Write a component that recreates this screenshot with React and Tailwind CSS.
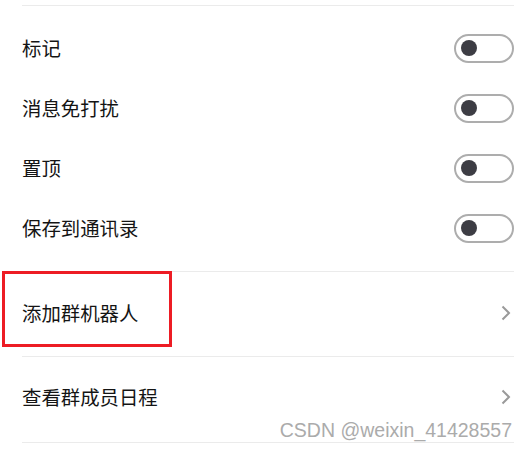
import React from "react";

const font = { fontFamily: '"Noto Sans CJK SC", "Noto Sans", sans-serif' };

function Toggle() {
  return (
    <div className="w-[60px] h-[29px] rounded-full border-2 border-[#adadad] bg-white flex items-center pl-[5px]">
      <div className="w-[16px] h-[16px] rounded-full bg-[#3d3d44]" />
    </div>
  );
}

function Chevron() {
  return (
    <svg width="10" height="16" viewBox="0 0 10 16" className="mr-[3px]">
      <path d="M1.5 1.5 L8 8 L1.5 14.5" fill="none" stroke="#9a9a9a" strokeWidth="2" />
    </svg>
  );
}

function ToggleRow({ label }) {
  return (
    <div className="h-[60px] flex items-center justify-between">
      <span className="text-[19.4px] text-[#141414] leading-none">{label}</span>
      <Toggle />
    </div>
  );
}

export default function App() {
  return (
    <div className="w-[527px] h-[450px] bg-white relative overflow-hidden" style={font}>
      <div className="ml-[22px] mr-[13px] pt-[5px]">
        <div className="h-px bg-[#ebebeb]" />
        <div className="pt-3 pb-[13px]">
          <ToggleRow label="标记" />
          <ToggleRow label="消息免打扰" />
          <ToggleRow label="置顶" />
          <ToggleRow label="保存到通讯录" />
        </div>
        <div className="h-px bg-[#ebebeb]" />
        <div className="h-[84px] pb-[2px] flex items-center justify-between">
          <span className="text-[19.4px] text-[#141414] leading-none">添加群机器人</span>
          <Chevron />
        </div>
        <div className="h-px bg-[#ebebeb]" />
        <div className="h-[85px] pb-[5px] flex items-center justify-between">
          <span className="text-[19.4px] text-[#141414] leading-none">查看群成员日程</span>
          <Chevron />
        </div>
        <div className="h-px bg-[#ebebeb]" />
      </div>
      <div className="absolute left-[2px] top-[271px] w-[170px] h-[76px] border-[3px] border-[#ed1c24]" />
      <div
        className="absolute right-[15px] top-[419px] text-[19.5px] leading-[22px] text-[#ababab]"
        style={{ fontFamily: '"Liberation Sans", Arial, sans-serif' }}
      >
        CSDN @weixin_41428557
      </div>
    </div>
  );
}
